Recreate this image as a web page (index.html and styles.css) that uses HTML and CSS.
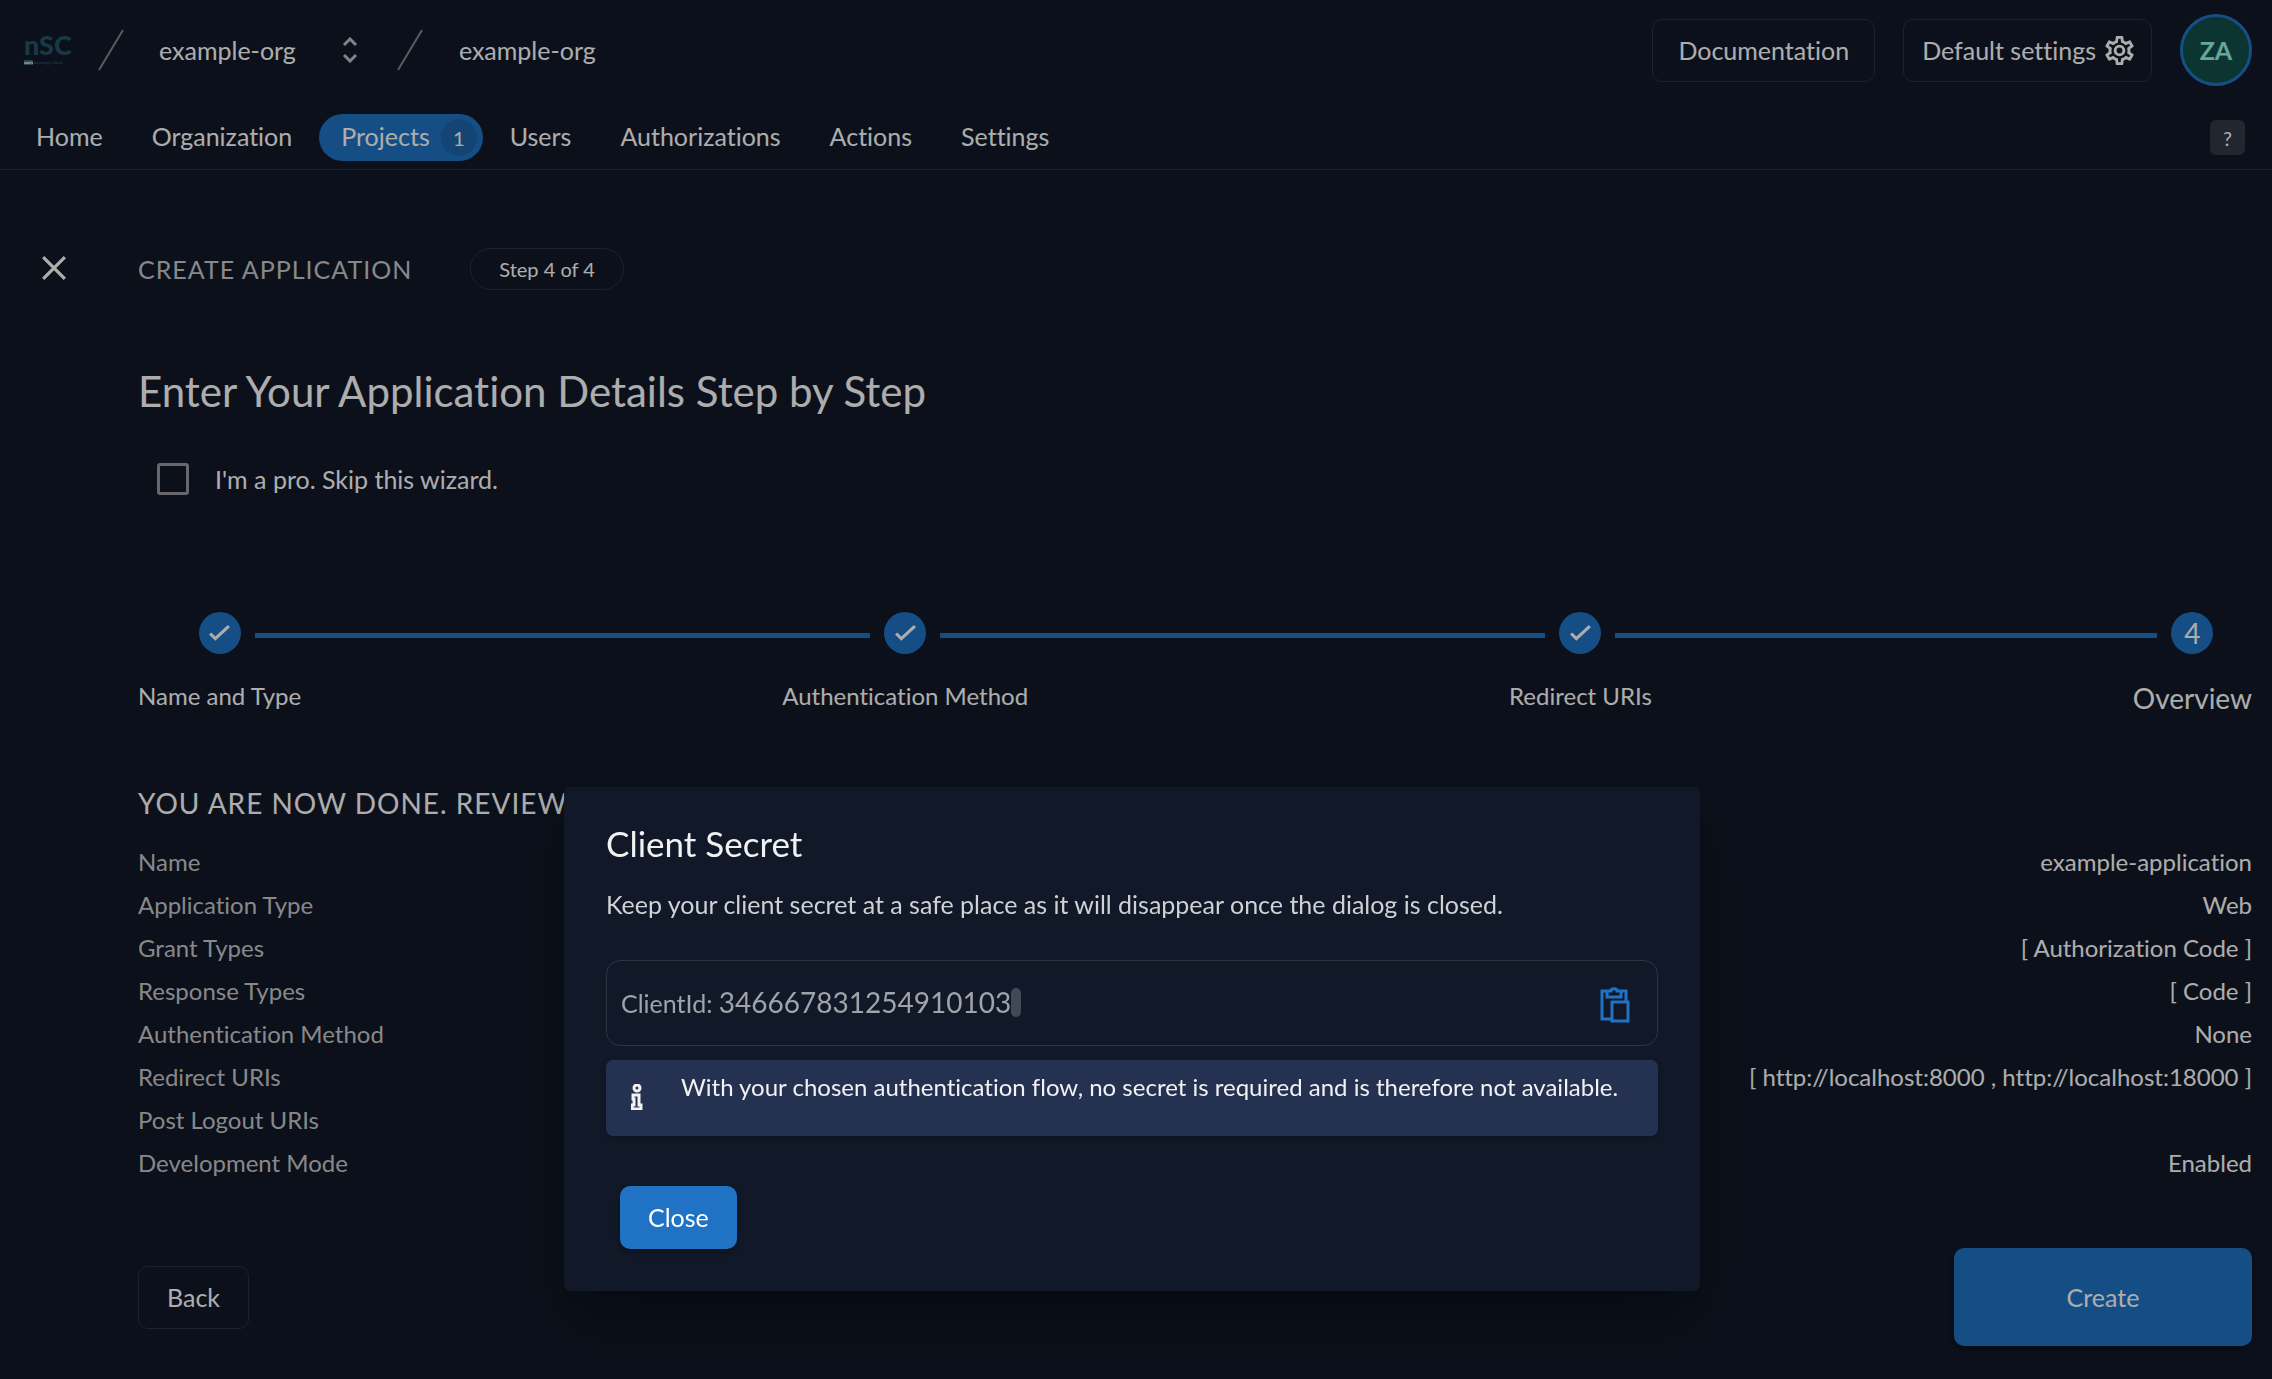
FILE: index.html
```
<!DOCTYPE html>
<html lang="en">
<head>
  <meta charset="UTF-8" />
  <title>Create Application</title>
  <meta name="viewport" content="width=device-width, initial-scale=1.0" />

  <link rel="stylesheet" href="styles.css">
</head>

<body>
  <header class="header">
    <a class="logo" href="#">
      <span class="logo-name">nSC</span>
      <span class="logo-sub"><b>noris</b> Sovereign Cloud</span>
    </a>
    <svg class="slash" viewBox="0 0 26 42"><path d="M1 41 25 1" /></svg>
    <button class="org-switch" type="button">
      example-org
      <svg class="chevrons" viewBox="0 0 16 26"><path d="m2 8 6-6 6 6M2 18l6 6 6-6" /></svg>
    </button>
    <svg class="slash" viewBox="0 0 26 42"><path d="M1 41 25 1" /></svg>
    <a class="crumb" href="#">example-org</a>

    <div class="header-right">
      <a class="btn" href="#">Documentation</a>
      <a class="btn btn-settings" href="#">
        Default settings
        <svg class="cog" viewBox="0 0 24 24"><path d="M12,8A4,4 0 0,1 16,12A4,4 0 0,1 12,16A4,4 0 0,1 8,12A4,4 0 0,1 12,8M12,10A2,2 0 0,0 10,12A2,2 0 0,0 12,14A2,2 0 0,0 14,12A2,2 0 0,0 12,10M10,22C9.75,22 9.54,21.82 9.5,21.58L9.13,18.93C8.5,18.68 7.96,18.34 7.44,17.94L4.95,18.95C4.73,19.03 4.46,18.95 4.34,18.73L2.34,15.27C2.21,15.05 2.27,14.78 2.46,14.63L4.57,12.97L4.5,12L4.57,11L2.46,9.37C2.27,9.22 2.21,8.95 2.34,8.73L4.34,5.27C4.46,5.05 4.73,4.96 4.95,5.05L7.44,6.05C7.96,5.66 8.5,5.32 9.13,5.07L9.5,2.42C9.54,2.18 9.75,2 10,2H14C14.25,2 14.46,2.18 14.5,2.42L14.87,5.07C15.5,5.32 16.04,5.66 16.56,6.05L19.05,5.05C19.27,4.96 19.54,5.05 19.66,5.27L21.66,8.73C21.79,8.95 21.73,9.22 21.54,9.37L19.43,11L19.5,12L19.43,13L21.54,14.63C21.73,14.78 21.79,15.05 21.66,15.27L19.66,18.73C19.54,18.95 19.27,19.04 19.05,18.95L16.56,17.95C16.04,18.34 15.5,18.68 14.87,18.93L14.5,21.58C14.46,21.82 14.25,22 14,22H10M11.25,4L10.88,6.61C9.68,6.86 8.62,7.5 7.85,8.39L5.44,7.35L4.69,8.65L6.8,10.2C6.4,11.37 6.4,12.64 6.8,13.8L4.68,15.36L5.43,16.66L7.86,15.62C8.63,16.5 9.68,17.14 10.87,17.38L11.24,20H12.76L13.13,17.39C14.32,17.14 15.37,16.5 16.14,15.62L18.57,16.66L19.32,15.36L17.2,13.81C17.6,12.64 17.6,11.37 17.2,10.2L19.31,8.65L18.56,7.35L16.15,8.39C15.38,7.5 14.32,6.86 13.12,6.62L12.75,4H11.25Z" /></svg>
      </a>
      <button class="avatar" type="button">ZA</button>
    </div>
  </header>

  <nav class="nav">
    <a href="#">Home</a>
    <a href="#">Organization</a>
    <a class="active" href="#">Projects <span class="count">1</span></a>
    <a href="#">Users</a>
    <a href="#">Authorizations</a>
    <a href="#">Actions</a>
    <a href="#">Settings</a>
    <button class="help" type="button">?</button>
  </nav>

  <main class="main">
    <button class="close-page" type="button" aria-label="Leave">
      <svg viewBox="0 0 24 24"><path d="M2 2l20 20M22 2 2 22" /></svg>
    </button>

    <div class="content">
      <div class="top-row">
        <span class="page-name">CREATE APPLICATION</span>
        <span class="step-pill">Step 4 of 4</span>
      </div>

      <h1>Enter Your Application Details Step by Step</h1>

      <div class="pro">
        <input type="checkbox" id="pro" />
        <label for="pro">I'm a pro. Skip this wizard.</label>
      </div>

      <ol class="stepper">
        <li class="step">
          <div class="marker">
            <span class="dot"><svg viewBox="0 0 24 24"><path d="m3 12 5 5L21 5" /></svg></span>
          </div>
          <span class="step-label">Name and Type</span>
        </li>
        <li class="connector"></li>
        <li class="step">
          <div class="marker">
            <span class="dot"><svg viewBox="0 0 24 24"><path d="m3 12 5 5L21 5" /></svg></span>
          </div>
          <span class="step-label">Authentication Method</span>
        </li>
        <li class="connector"></li>
        <li class="step">
          <div class="marker">
            <span class="dot"><svg viewBox="0 0 24 24"><path d="m3 12 5 5L21 5" /></svg></span>
          </div>
          <span class="step-label">Redirect URIs</span>
        </li>
        <li class="connector"></li>
        <li class="step current">
          <div class="marker"><span class="dot">4</span></div>
          <span class="step-label">Overview</span>
        </li>
      </ol>

      <h2>YOU ARE NOW DONE. REVIEW</h2>

      <table class="review">
        <tr><th scope="row">Name</th><td>example-application</td></tr>
        <tr><th scope="row">Application Type</th><td>Web</td></tr>
        <tr><th scope="row">Grant Types</th><td>[ Authorization Code ]</td></tr>
        <tr><th scope="row">Response Types</th><td>[ Code ]</td></tr>
        <tr><th scope="row">Authentication Method</th><td>None</td></tr>
        <tr><th scope="row">Redirect URIs</th><td>[ http://localhost:8000 , http://localhost:18000 ]</td></tr>
        <tr><th scope="row">Post Logout URIs</th><td></td></tr>
        <tr><th scope="row">Development Mode</th><td>Enabled</td></tr>
      </table>

      <div class="actions">
        <button class="btn" type="button">Back</button>
        <button class="btn-primary btn-create" type="button">Create</button>
      </div>
    </div>
  </main>

  <div class="overlay">
    <div class="dialog" role="dialog" aria-labelledby="dialogTitle">
      <h3 id="dialogTitle">Client Secret</h3>
      <p>Keep your client secret at a safe place as it will disappear once the dialog is closed.</p>

      <div class="client-id">
        <span>ClientId: <span class="id-value">346667831254910103</span></span>
        <span class="id-mark"></span>
        <button class="copy" type="button" aria-label="Copy">
          <svg viewBox="0 0 30 36"><path d="M11 32H2V4h8m8 0h8v10M7 4v6h14V4h-4c0-3-6-3-6 0zM12 15h16v19H12z" /></svg>
        </button>
      </div>

      <div class="info">
        <svg class="info-icon" viewBox="0 0 12 26"><circle cx="6" cy="4" r="3" /><path d="M2 11h6v10h2v4H1v-4h2v-6H2z" /></svg>
        <span>With your chosen authentication flow, no secret is required and is therefore not available.</span>
      </div>

      <button class="btn-primary btn-close" type="button">Close</button>
    </div>
  </div>
</body>
</html>
```
FILE: styles.css
```
* {
  box-sizing: border-box;
}

body {
  font-family: Lato, "Liberation Sans", sans-serif;
  font-size: 25px;
  line-height: 30px;
  font-variant-ligatures: none;
  background: #111827;
  margin: 0;
  color: #fff;
}

a {
  color: inherit;
  text-decoration: none;
}

button {
  font: inherit;
  color: inherit;
  background: none;
  border: none;
  padding: 0;
  cursor: pointer;
}

svg {
  display: block;
  fill: none;
  stroke: currentColor;
}

h1, h2, h3, p {
  margin: 0;
  font-weight: 400;
}

/* header */
.header {
  display: flex;
  align-items: center;
  height: 100px;
  padding: 0 20px 0 24px;
}

.logo {
  display: flex;
  flex-direction: column;
  width: 48px;
  margin: 0 26px 4px 0;
  color: #265565;
}

.logo-name {
  font-size: 27px;
  line-height: 30px;
  font-weight: 900;
}

.logo-sub {
  font-size: 4px;
  line-height: 6px;
  font-weight: 700;
  white-space: nowrap;
}

.logo-sub b {
  background: #3f6672;
  color: #fff;
}

.slash {
  width: 26px;
  height: 42px;
  stroke: #83868e;
  stroke-width: 2;
}

.org-switch {
  display: flex;
  align-items: center;
  gap: 46px;
  margin: 0 39px 0 35px;
}

.chevrons {
  width: 16px;
  height: 26px;
  stroke: #c0c2c6;
  stroke-width: 3;
}

.crumb {
  margin-left: 36px;
}

.header-right {
  display: flex;
  align-items: center;
  gap: 28px;
  margin-left: auto;
}

.btn {
  display: flex;
  align-items: center;
  height: 63px;
  padding: 0 25px;
  border: 1px solid #2b313f;
  border-radius: 10px;
}

.btn-settings {
  gap: 6px;
  padding: 0 14px 0 18px;
}

.cog {
  width: 35px;
  height: 35px;
  fill: currentColor;
  stroke: none;
}

.avatar {
  width: 72px;
  height: 72px;
  border: 3px solid #2073c4;
  border-radius: 50%;
  background: #134e4a;
  color: #99f6e4;
  font-weight: 700;
}

/* navigation */
.nav {
  display: flex;
  align-items: center;
  gap: 5px;
  padding: 14px 27px 8px 14px;
  border-bottom: 1px solid #2b313f;
}

.nav a {
  display: flex;
  align-items: center;
  height: 47px;
  padding: 0 22px 3px;
  border-radius: 24px;
}

.nav .active {
  background: #2073c4;
  padding-right: 6px;
  gap: 11px;
}

.count {
  width: 36px;
  height: 37px;
  margin-top: 2px;
  border-radius: 50%;
  background: #1c65ac;
  font-size: 20px;
  line-height: 38px;
  text-align: center;
}

.help {
  width: 35px;
  height: 35px;
  margin-left: auto;
  border-radius: 6px;
  background: #333945;
  font-size: 20px;
}

/* page */
.main {
  display: grid;
  grid-template-columns: 138px 1fr;
  align-items: start;
  padding: 78px 20px 32px 0;
}

.close-page {
  width: 108px;
  height: 40px;
  display: flex;
  align-items: center;
  justify-content: center;
}

.close-page svg {
  width: 26px;
  height: 26px;
  stroke-width: 3;
}

.top-row {
  display: flex;
  align-items: center;
  gap: 58px;
}

.page-name {
  color: #c8c9cc;
  letter-spacing: 1px;
}

.step-pill {
  height: 42px;
  padding: 0 28px;
  border: 1px solid #2b313f;
  border-radius: 21px;
  font-size: 20px;
  line-height: 40px;
}

h1 {
  margin-top: 76px;
  font-size: 42px;
  line-height: 50px;
}

.pro {
  display: flex;
  align-items: center;
  gap: 26px;
  margin: 47px 0 0 19px;
}

.pro input {
  appearance: none;
  width: 32px;
  height: 32px;
  margin: 0;
  border: 3px solid #98989f;
  border-radius: 3px;
}

.stepper {
  display: flex;
  align-items: flex-start;
  list-style: none;
  margin: 117px 0 0;
  padding: 0;
}

.marker {
  display: flex;
  gap: 14px;
}

/* lines run through the step up to its dot */
.marker::before,
.marker::after {
  content: "";
  flex: 1;
}

.connector,
.marker::before,
.marker::after {
  height: 5px;
  margin-top: 21px;
  background: #2073c4;
}

.connector {
  flex: 1;
}

.step:first-child .marker::before,
.step:last-child .marker::after {
  background: none;
}

.dot {
  display: flex;
  align-items: center;
  justify-content: center;
  width: 42px;
  height: 42px;
  border-radius: 50%;
  background: #2073c4;
  font-size: 28px;
}

.dot svg {
  width: 25px;
  height: 25px;
  stroke-width: 3;
}

.step-label {
  display: block;
  margin-top: 27px;
  font-size: 24px;
}

.current .step-label {
  font-size: 28px;
  line-height: 34px;
}

h2 {
  margin-top: 71px;
  font-size: 28px;
  line-height: 34px;
  letter-spacing: 1px;
}

.review {
  width: 100%;
  margin-top: 20px;
  border-collapse: collapse;
  font-size: 24px;
}

.review th,
.review td {
  height: 43px;
  padding: 0;
  font-weight: 400;
}

.review th {
  text-align: left;
  color: #c8c9cc;
}

.review td {
  text-align: right;
}

.actions {
  display: flex;
  align-items: center;
  justify-content: space-between;
  margin-top: 64px;
}

.actions .btn {
  padding: 0 28px;
}

.btn-primary {
  height: 63px;
  border-radius: 10px;
  background: #2073c4;
  box-shadow: 0 3px 6px rgba(0,0,0,0.3);
}

.btn-create {
  width: 298px;
  height: 98px;
}

/* dialog */
.overlay {
  position: fixed;
  inset: 0;
  display: flex;
  align-items: flex-start;
  justify-content: center;
  padding: 57vh 8px 0 0;
  background: rgba(0,0,0,0.32);
}

.dialog {
  width: 50vw;
  margin-top: 1px;
  padding: 35px 42px 42px;
  border-radius: 7px;
  background: #111827;
  box-shadow: 0 19px 26px -12px rgba(0,0,0,0.2), 0 42px 66px 5px rgba(0,0,0,0.14), 0 16px 80px 14px rgba(0,0,0,0.12);
}

.dialog h3 {
  font-size: 35px;
  line-height: 42px;
  color: #f0f1f2;
}

.dialog p {
  margin-top: 25px;
  color: #cfd1d4;
}

.client-id {
  display: flex;
  align-items: center;
  height: 86px;
  margin-top: 41px;
  padding: 0 27px 2px 14px;
  border: 1px solid #2f3543;
  border-radius: 14px;
  color: #a0a3a9;
}

.id-value {
  font-size: 28px;
}

.id-mark {
  width: 10px;
  height: 29px;
  border-radius: 5px;
  background: #434858;
}

.copy {
  margin: 5px 0 0 auto;
  color: #2073c4;
}

.copy svg {
  width: 30px;
  height: 36px;
  stroke-width: 3;
}

.info {
  display: flex;
  align-items: flex-start;
  gap: 38px;
  height: 76px;
  margin-top: 14px;
  padding: 12px 25px;
  border-radius: 7px;
  background: #243150;
  color: #f2f2f3;
  font-size: 24px;
  white-space: nowrap;
  box-shadow: 0 3px 6px rgba(0,0,0,0.15);
}

.info-icon {
  width: 12px;
  height: 26px;
  margin-top: 12px;
  stroke-width: 3;
}

.btn-close {
  margin: 50px 0 0 14px;
  padding: 0 28px 2px;
}
```
